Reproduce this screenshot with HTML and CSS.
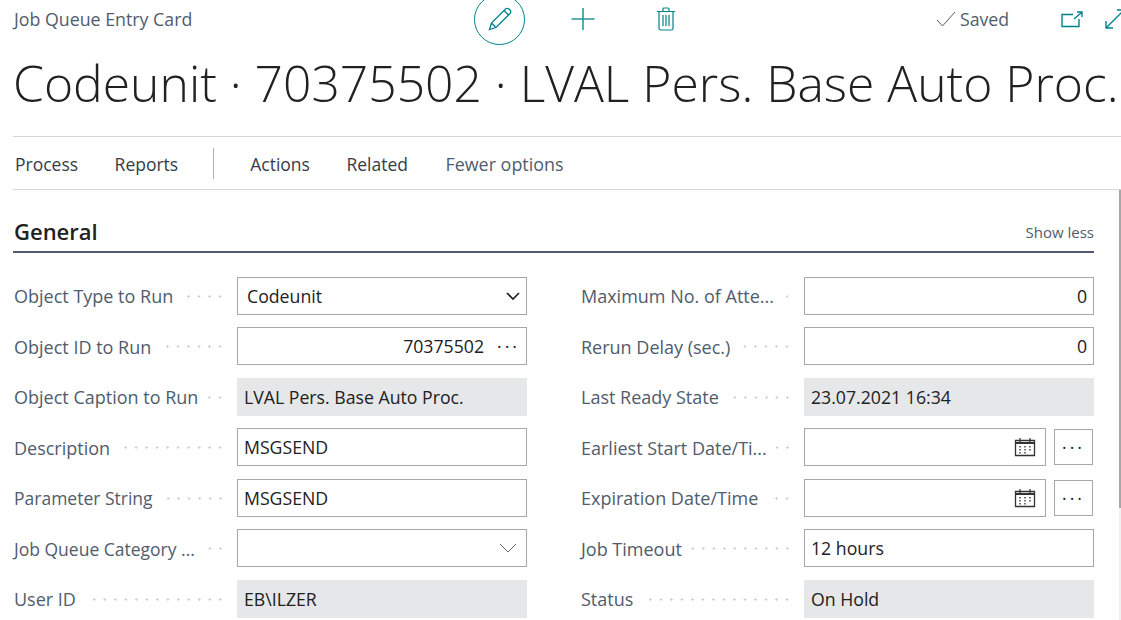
FILE: index.html
```html
<!DOCTYPE html>
<html lang="en">
  <head>
    <meta charset="UTF-8" />
    <title>Job Queue Entry Card</title>
    <link rel="stylesheet" href="styles.css">
  </head>

  <body>
    <div class="page">
      <header class="top">
        <div class="caption">Job Queue Entry Card</div>
        <div class="edit-circle">
          <svg width="26" height="26" viewBox="0 0 26 26" fill="none" stroke="#00838a" stroke-width="1.3"><path d="M2.5 23.5 L4.5 17 L18.5 3 Q20 1.6 22 3 L23.2 4.2 Q24.5 6 23 7.5 L9 21.5 Z M4.5 17 L9 21.5 M17 4.5 L21.5 9"/></svg>
        </div>
        <svg class="plus" width="24" height="24" viewBox="0 0 24 24" stroke="#2b979c" stroke-width="1.6"><path d="M0.5 12 H23.5 M12 1 V23"/></svg>
        <svg class="trash" width="20" height="24" viewBox="0 0 20 24" fill="none" stroke="#00838a" stroke-width="1.2"><path d="M1 4.5 H19 M3 4.5 V21.5 Q3 23 4.5 23 H15.5 Q17 23 17 21.5 V4.5 M7 4.5 V2 Q7 1 8 1 H12 Q13 1 13 2 V4.5 M7 8 V19 M10 8 V19 M13 8 V19"/></svg>
        <div class="saved">
          <svg width="20" height="16" viewBox="0 0 20 16" fill="none" stroke="#505c6d" stroke-width="1"><path d="M1 9 L6.5 15 L19 1"/></svg>
          Saved
        </div>
        <svg class="popout" width="22" height="17" viewBox="0 0 22 17" fill="none" stroke="#00838a" stroke-width="1.4"><path d="M12 3.5 H1 V15.5 H18 V8 M13 8 L20.5 1.5 M16 1 H21 V6"/></svg>
        <svg class="expand" width="20" height="20" viewBox="0 0 20 20" fill="none" stroke="#00838a" stroke-width="1.4"><path d="M1 19 L19 1 M1 12 V19 H8 M12 1 H19 V8"/></svg>
      </header>

      <h1 class="title">Codeunit · 70375502 · LVAL Pers. Base Auto Proc.</h1>

      <nav class="actions">
        <a>Process</a>
        <a>Reports</a>
        <span class="sep"></span>
        <a>Actions</a>
        <a>Related</a>
        <a class="muted">Fewer options</a>
      </nav>

      <div class="content">
        <section class="general">
          <div class="section-head">
            <h2>General</h2>
            <span>Show less</span>
          </div>

          <div class="form">
            <div class="field">
              <label>Object Type to Run<i></i></label>
              <div class="box select">Codeunit
                <svg width="14" height="8" viewBox="0 0 14 8" fill="none" stroke="#212121" stroke-width="1.7"><path d="M1 1 L7 7 L13 1"/></svg>
              </div>
            </div>
            <div class="field">
              <label>Maximum No. of Atte...<i></i></label>
              <div class="box num">0</div>
            </div>

            <div class="field">
              <label>Object ID to Run<i></i></label>
              <div class="box num assist">70375502<b>···</b></div>
            </div>
            <div class="field">
              <label>Rerun Delay (sec.)<i></i></label>
              <div class="box num">0</div>
            </div>

            <div class="field">
              <label>Object Caption to Run<i></i></label>
              <div class="box readonly">LVAL Pers. Base Auto Proc.</div>
            </div>
            <div class="field">
              <label>Last Ready State<i></i></label>
              <div class="box readonly">23.07.2021 16:34</div>
            </div>

            <div class="field">
              <label>Description<i></i></label>
              <div class="box">MSGSEND</div>
            </div>
            <div class="field">
              <label>Earliest Start Date/Ti...<i></i></label>
              <div class="date-wrap">
                <div class="box date">
                  <svg width="22" height="20" viewBox="0 0 22 20"><use href="#cal"/></svg>
                </div>
                <div class="more">···</div>
              </div>
            </div>

            <div class="field">
              <label class="tight">Parameter String<i></i></label>
              <div class="box">MSGSEND</div>
            </div>
            <div class="field">
              <label>Expiration Date/Time<i></i></label>
              <div class="date-wrap">
                <div class="box date">
                  <svg width="22" height="20" viewBox="0 0 22 20"><use href="#cal"/></svg>
                </div>
                <div class="more">···</div>
              </div>
            </div>

            <div class="field">
              <label class="tight">Job Queue Category ...<i></i></label>
              <div class="box select">
                <svg class="thin" width="18" height="10" viewBox="0 0 18 10" fill="none" stroke="#6b6b6b" stroke-width="1"><path d="M1 1 L9 9 L17 1"/></svg>
              </div>
            </div>
            <div class="field">
              <label>Job Timeout<i></i></label>
              <div class="box">12 hours</div>
            </div>

            <div class="field">
              <label>User ID<i></i></label>
              <div class="box readonly">EB\ILZER</div>
            </div>
            <div class="field">
              <label>Status<i></i></label>
              <div class="box readonly">On Hold</div>
            </div>
          </div>
        </section>
        <div class="scrollbar"><div class="thumb"></div></div>
      </div>
    </div>

    <svg class="defs" width="0" height="0">
      <symbol id="cal" viewBox="0 0 22 20">
        <path d="M1.5 3.5 H20.5 V18.5 H1.5 Z" fill="none" stroke="#333" stroke-width="1.3"/>
        <path d="M1.5 6 H20.5" stroke="#333" stroke-width="2"/>
        <path d="M6 1 V5 M16 1 V5" stroke="#333" stroke-width="1.2"/>
        <path d="M5 9 h2 v1.5 h-2 z M10 9 h2 v1.5 h-2 z M15 9 h2 v1.5 h-2 z M5 12 h2 v1.5 h-2 z M10 12 h2 v1.5 h-2 z M15 12 h2 v1.5 h-2 z M5 15 h2 v1.5 h-2 z M10 15 h2 v1.5 h-2 z" fill="#777"/>
      </symbol>
    </svg>
  </body>
</html>
```

FILE: styles.css
```css
* {
  box-sizing: border-box;
}
html,
body {
  margin: 0;
  height: 100%;
  overflow: hidden;
  background: #fff;
}
body {
  font-family: "Open Sans", "Noto Sans", sans-serif;
  font-size: 17.7px;
  color: #212121;
}
.page {
  height: 620px;
  overflow: hidden;
  padding-left: 13px;
}
.defs {
  position: absolute;
}

/* top row */
.top {
  height: 38px;
  display: flex;
  align-items: center;
}
.caption {
  width: 461px;
  padding-left: 1px;
  color: #505c6d;
  font-size: 17.8px;
  flex-shrink: 0;
}
.edit-circle {
  width: 51px;
  height: 51px;
  border: 1px solid #00838a;
  border-radius: 50%;
  display: flex;
  align-items: center;
  justify-content: center;
  flex-shrink: 0;
}
.plus {
  margin-left: 46px;
  flex-shrink: 0;
}
.trash {
  margin-left: 61px;
  flex-shrink: 0;
}
.saved {
  margin-left: 260px;
  width: 125px;
  display: flex;
  align-items: center;
  gap: 4px;
  color: #505c6d;
  flex-shrink: 0;
}
.popout {
  flex-shrink: 0;
}
.expand {
  margin-left: 22px;
  flex-shrink: 0;
}

/* title */
.title {
  margin: 0;
  height: 99px;
  padding-top: 11px;
  border-bottom: 1px solid #d5d6da;
  font-size: 49.8px;
  line-height: 68px;
  font-weight: 300;
  white-space: nowrap;
}

/* action bar */
.actions {
  height: 53px;
  display: flex;
  align-items: center;
  border-bottom: 1px solid #d5d6da;
  padding: 1px 0 0 2px;
  gap: 36.5px;
  font-size: 17.5px;
  color: #333c48;
}
.actions .muted {
  margin-left: 1px;
  font-size: 17.9px;
  color: #505c6d;
}
.sep {
  width: 1px;
  height: 31px;
  margin-left: -2px;
  background: #a9b0ba;
}

/* content */
.content {
  display: flex;
  height: 431px;
}
.general {
  width: 1081px;
}
.scrollbar {
  width: 2px;
  margin-left: 25px;
  background: #f1f1f1;
}
.thumb {
  height: 318px;
  background: #a6a6a6;
}
.section-head {
  height: 63px;
  display: flex;
  align-items: flex-end;
  justify-content: space-between;
  border-bottom: 2px solid #505c6d;
  padding: 0 0 5px 1px;
}
.section-head h2 {
  margin: 0;
  font-size: 22px;
  font-weight: 600;
  line-height: 30px;
}
.section-head span {
  font-size: 15px;
  color: #505c6d;
  line-height: 28px;
}
.form {
  display: grid;
  grid-template-columns: 1fr 1fr;
  column-gap: 53px;
  row-gap: 12.5px;
  padding-top: 23.9px;
}
.field {
  display: grid;
  grid-template-columns: 224px 1fr;
  height: 38px;
  align-items: center;
}
.field label {
  display: flex;
  align-items: center;
  color: #505c6d;
  font-size: 18px;
  padding: 1px 11.5px 0 1px;
  white-space: nowrap;
}
.field label.tight {
  font-size: 17.5px;
}
/* dot leader */
.field label i {
  flex: 1;
  height: 3px;
  margin-left: 9px;
  background: radial-gradient(circle, #d0d0d0 1px, transparent 1.2px) right center / 10.5px 3px repeat-x;
}
.box {
  height: 38px;
  border: 1px solid #a8a8a8;
  padding: 0 6px;
  display: flex;
  align-items: center;
  white-space: nowrap;
}
.select {
  padding-left: 9px;
  justify-content: space-between;
  padding-right: 6px;
}
.select svg {
  margin-left: auto;
}
.select .thin {
  margin-right: 3px;
}
.num {
  justify-content: flex-end;
}
.assist b {
  font-weight: 400;
  letter-spacing: 3px;
  margin-left: 13px;
  margin-right: 0;
}
.readonly {
  border-color: #e6e7e9;
  background: #e6e7e9;
}
.date-wrap {
  display: flex;
  align-items: center;
  gap: 8px;
}
.date {
  flex: 1;
  justify-content: flex-end;
  padding-right: 9px;
}
.more {
  width: 39px;
  height: 36px;
  border: 1px solid #a8a8a8;
  display: flex;
  align-items: center;
  justify-content: center;
  letter-spacing: 3px;
  margin-right: 1px;
}
```
